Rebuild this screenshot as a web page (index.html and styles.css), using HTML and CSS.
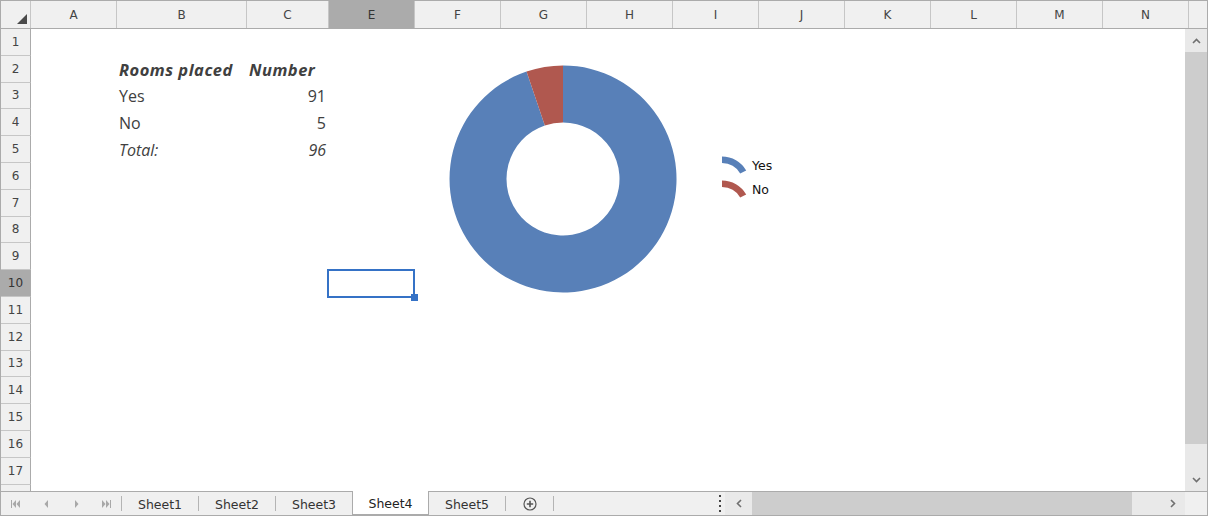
FILE: index.html
```html
<!DOCTYPE html>
<html lang="en">
<head>
    <meta charset="UTF-8">
    <title>Sheet4</title>
    <link rel="stylesheet" href="styles.css">
</head>
<body>
    <div class="book">
        <div class="colbar">
            <div class="corner">
                <svg width="10" height="10" viewBox="0 0 10 10"><path d="M10 0 L10 10 L0 10 Z" fill="#4a4a4a"/></svg>
            </div>
            <div class="ch">A</div>
            <div class="ch wide">B</div>
            <div class="ch mid">C</div>
            <div class="ch sel">E</div>
            <div class="ch">F</div>
            <div class="ch">G</div>
            <div class="ch">H</div>
            <div class="ch">I</div>
            <div class="ch">J</div>
            <div class="ch">K</div>
            <div class="ch">L</div>
            <div class="ch">M</div>
            <div class="ch">N</div>
            <div class="ch"></div>
        </div>

        <div class="sheet">
            <div class="row"><div class="rh">1</div></div>
            <div class="row">
                <div class="rh">2</div>
                <div class="cell c-a"></div>
                <div class="cell c-b bold">Rooms placed</div>
                <div class="cell c-c bold">Number</div>
            </div>
            <div class="row">
                <div class="rh">3</div>
                <div class="cell c-a"></div>
                <div class="cell c-b">Yes</div>
                <div class="cell c-c num">91</div>
            </div>
            <div class="row">
                <div class="rh">4</div>
                <div class="cell c-a"></div>
                <div class="cell c-b">No</div>
                <div class="cell c-c num">5</div>
            </div>
            <div class="row">
                <div class="rh">5</div>
                <div class="cell c-a"></div>
                <div class="cell c-b ital">Total:</div>
                <div class="cell c-c num ital">96</div>
            </div>
            <div class="row"><div class="rh">6</div></div>
            <div class="row"><div class="rh">7</div></div>
            <div class="row"><div class="rh">8</div></div>
            <div class="row"><div class="rh">9</div></div>
            <div class="row">
                <div class="rh sel">10</div>
                <div class="cell c-a"></div>
                <div class="cell c-b"></div>
                <div class="cell c-c"></div>
                <div class="cell c-e"><div class="selection"><span class="handle"></span></div></div>
            </div>
            <div class="row"><div class="rh">11</div></div>
            <div class="row"><div class="rh">12</div></div>
            <div class="row"><div class="rh">13</div></div>
            <div class="row"><div class="rh">14</div></div>
            <div class="row"><div class="rh">15</div></div>
            <div class="row"><div class="rh">16</div></div>
            <div class="row"><div class="rh">17</div></div>
            <div class="row"><div class="rh"></div></div>

            <!-- chart object floating over the cells -->
            <div class="chart">
                <svg class="donut" width="240" height="240" viewBox="0 0 240 240">
                    <path d="M120 6.5 A113.5 113.5 0 1 1 83.52 12.53 L101.84 66.5 A56.5 56.5 0 1 0 120 63.5 Z" fill="#5880b8"/>
                    <path d="M83.52 12.53 A113.5 113.5 0 0 1 120 6.5 L120 63.5 A56.5 56.5 0 0 0 101.84 66.5 Z" fill="#b0584f"/>
                </svg>
                <div class="legend">
                    <div class="legend-item">
                        <svg width="25" height="18" viewBox="0 0 25 18"><path d="M0 0.5 A28 28 0 0 1 24.2 14.5 L18.2 17.5 A21 21 0 0 0 0 7 Z" fill="#5880b8"/></svg>
                        <span>Yes</span>
                    </div>
                    <div class="legend-item">
                        <svg width="25" height="18" viewBox="0 0 25 18"><path d="M0 0.5 A28 28 0 0 1 24.2 14.5 L18.2 17.5 A21 21 0 0 0 0 7 Z" fill="#b0584f"/></svg>
                        <span>No</span>
                    </div>
                </div>
            </div>
        </div>

        <div class="vscroll">
            <div class="sbtn up">
                <svg width="9" height="6" viewBox="0 0 9 6"><path d="M1 5 L4.5 1.5 L8 5" fill="none" stroke="#707070" stroke-width="1.6"/></svg>
            </div>
            <div class="vthumb"></div>
            <div class="vtrack"></div>
            <div class="sbtn down">
                <svg width="9" height="6" viewBox="0 0 9 6"><path d="M1 1 L4.5 4.5 L8 1" fill="none" stroke="#707070" stroke-width="1.6"/></svg>
            </div>
        </div>

        <div class="tabbar">
            <div class="nav">
                <div class="nav-btn">
                    <svg width="10" height="8" viewBox="0 0 10 8"><rect x="0" y="0" width="1" height="8" fill="#a8a8a8"/><path d="M5 0 L1.5 4 L5 8 Z M9 0 L5.5 4 L9 8 Z" fill="#a8a8a8"/></svg>
                </div>
                <div class="nav-btn">
                    <svg width="5" height="8" viewBox="0 0 5 8"><path d="M4 0 L0.5 4 L4 8 Z" fill="#a8a8a8"/></svg>
                </div>
                <div class="nav-btn">
                    <svg width="5" height="8" viewBox="0 0 5 8"><path d="M1 0 L4.5 4 L1 8 Z" fill="#a8a8a8"/></svg>
                </div>
                <div class="nav-btn">
                    <svg width="10" height="8" viewBox="0 0 10 8"><path d="M1 0 L4.5 4 L1 8 Z M5 0 L8.5 4 L5 8 Z" fill="#a8a8a8"/><rect x="9" y="0" width="1" height="8" fill="#a8a8a8"/></svg>
                </div>
            </div>
            <span class="sep"></span>
            <div class="tab">Sheet1</div>
            <span class="sep"></span>
            <div class="tab">Sheet2</div>
            <span class="sep"></span>
            <div class="tab">Sheet3</div>
            <div class="tab active">Sheet4</div>
            <div class="tab">Sheet5</div>
            <span class="sep"></span>
            <div class="tab add">
                <svg width="14" height="14" viewBox="0 0 14 14"><circle cx="7" cy="7" r="6" fill="none" stroke="#555" stroke-width="1.2"/><path d="M7 3.8 V10.2 M3.8 7 H10.2" stroke="#555" stroke-width="1.6"/></svg>
            </div>
            <span class="sep"></span>
            <div class="fill"></div>
            <div class="splitter"><i></i><i></i><i></i><i></i></div>
            <div class="hscroll">
                <div class="sbtn left">
                    <svg width="6" height="9" viewBox="0 0 6 9"><path d="M5 1 L1.5 4.5 L5 8" fill="none" stroke="#707070" stroke-width="1.6"/></svg>
                </div>
                <div class="hthumb"></div>
                <div class="htrack"></div>
                <div class="sbtn right">
                    <svg width="6" height="9" viewBox="0 0 6 9"><path d="M1 1 L4.5 4.5 L1 8" fill="none" stroke="#707070" stroke-width="1.6"/></svg>
                </div>
            </div>
            <div class="box"></div>
        </div>
    </div>
</body>
</html>
```

FILE: styles.css
```css
* {
    box-sizing: border-box;
}

body {
    margin: 0;
    background-color: #fff;
    font-family: 'DejaVu Sans', sans-serif;
}

.book {
    width: 1208px;
    height: 516px;
    border: 1px solid #ababab;
    display: grid;
    grid-template-columns: 1fr 22px;
    grid-template-rows: 28px 1fr 24px;
    overflow: hidden;
}

/* column headers */
.colbar {
    grid-column: 1 / 3;
    display: flex;
    background-color: #f0f0f0;
    border-bottom: 1px solid #ababab;
    overflow: hidden;
}

.corner {
    width: 30px;
    flex: none;
    border-right: 1px solid #c6c6c6;
    display: flex;
    align-items: flex-end;
    justify-content: flex-end;
    padding: 0 3px 4px 0;
}

.ch {
    width: 86px;
    flex: none;
    border-right: 1px solid #c6c6c6;
    display: flex;
    align-items: center;
    justify-content: center;
    font-size: 12px;
    color: #444;
}

.ch.wide {
    width: 130px;
}

.ch.mid {
    width: 82px;
}

.ch.sel {
    background-color: #ababab;
    color: #333;
}

/* cells */
.sheet {
    position: relative;
    overflow: hidden;
}

.row {
    display: flex;
    height: 26.8px;
}

.rh {
    width: 30px;
    flex: none;
    background-color: #f0f0f0;
    border-right: 1px solid #ababab;
    border-bottom: 1px solid #c6c6c6;
    display: flex;
    align-items: center;
    justify-content: center;
    font-size: 12px;
    color: #444;
}

.rh.sel {
    background-color: #ababab;
    color: #333;
}

.cell {
    flex: none;
    display: flex;
    align-items: center;
    padding: 1px 3px 0 2px;
    font-family: 'Open Sans', sans-serif;
    font-size: 16px;
    color: #404040;
    white-space: nowrap;
}

.c-a { width: 86px; }
.c-b { width: 130px; }
.c-c { width: 82px; }
.c-e { width: 86px; position: relative; }

.cell.bold {
    font-weight: 700;
    font-style: italic;
    font-size: 16.5px;
    letter-spacing: 0.5px;
}

.cell.ital {
    font-style: italic;
}

.cell.num {
    justify-content: flex-end;
}

.selection {
    position: absolute;
    left: -2px;
    right: 0;
    top: -1px;
    bottom: -1px;
    border: 2px solid #3572c6;
}

.handle {
    position: absolute;
    right: -5px;
    bottom: -5px;
    width: 7px;
    height: 7px;
    background-color: #3572c6;
}

/* chart */
.chart {
    position: absolute;
    left: 442px;
    top: 30px;
    display: flex;
    align-items: center;
}

.donut {
    display: block;
}

.legend {
    margin-left: 39px;
    margin-bottom: 4px;
}

.legend-item {
    display: flex;
    align-items: center;
    height: 24px;
    font-size: 12.5px;
    color: #111;
}

.legend-item svg {
    margin-right: 5px;
}

/* scrollbars */
.vscroll {
    display: flex;
    flex-direction: column;
    background-color: #e9e9e9;
}

.sbtn {
    display: flex;
    align-items: center;
    justify-content: center;
    flex: none;
}

.sbtn.up {
    height: 23px;
}

.sbtn.down {
    height: 22px;
}

.vthumb {
    height: 392px;
    background-color: #cdcdcd;
}

.vtrack {
    flex: 1;
}

/* sheet tabs */
.tabbar {
    grid-column: 1 / 3;
    display: flex;
    background-color: #f0f0f0;
    border-top: 1px solid #ababab;
}

.nav {
    display: flex;
    width: 120px;
    flex: none;
}

.nav-btn {
    width: 30px;
    display: flex;
    align-items: center;
    justify-content: center;
}

.sep {
    width: 1px;
    flex: none;
    margin: 4px 0;
    background-color: #b4b4b4;
}

.tab {
    width: 76px;
    flex: none;
    display: flex;
    align-items: center;
    justify-content: center;
    padding-top: 1px;
    font-size: 12.5px;
    color: #333;
}

.tab.active {
    width: 77px;
    margin-top: -1px;
    background-color: #fff;
    border: 1px solid #ababab;
    border-top: none;
    padding-top: 2px;
    color: #222;
}

.tab.add {
    width: 47px;
}

.fill {
    flex: 1;
}

.splitter {
    width: 11px;
    flex: none;
    display: flex;
    flex-direction: column;
    align-items: center;
    justify-content: center;
    gap: 3px;
}

.splitter i {
    width: 2px;
    height: 2px;
    background-color: #444;
}

.hscroll {
    width: 460px;
    flex: none;
    display: flex;
    background-color: #e9e9e9;
}

.sbtn.left {
    width: 27px;
}

.sbtn.right {
    width: 24px;
}

.hthumb {
    width: 380px;
    background-color: #cdcdcd;
}

.htrack {
    flex: 1;
}

.box {
    width: 22px;
    flex: none;
    background-color: #f0f0f0;
}
```
